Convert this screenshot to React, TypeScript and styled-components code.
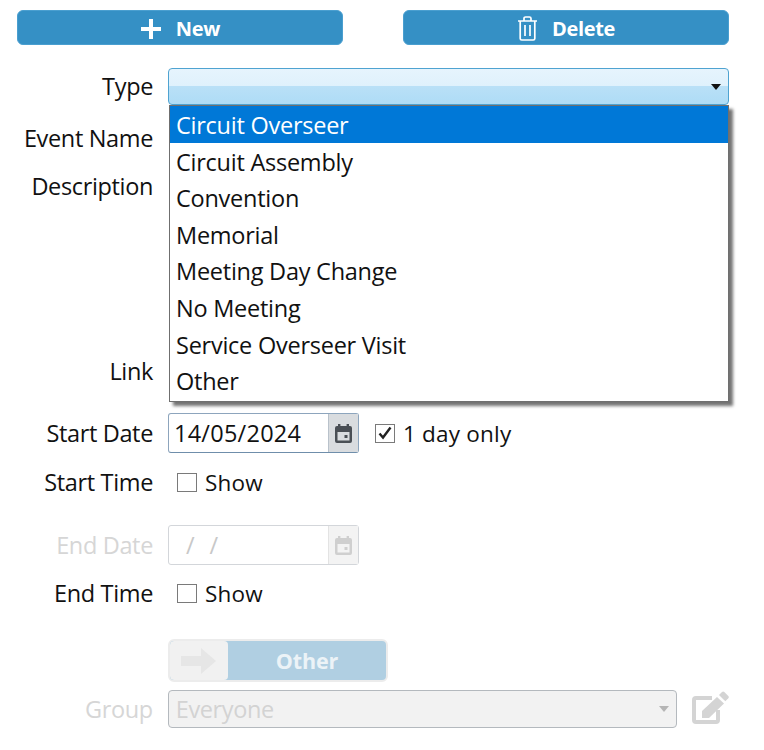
import React from "react";
import styled, { createGlobalStyle } from "styled-components";

const Global = createGlobalStyle`
  html, body { margin: 0; padding: 0; background: #fff; }
  body { font-family: "Open Sans", "Noto Sans", sans-serif; color: #111; }
`;

const Page = styled.div`
  position: relative;
  width: 764px;
  height: 750px;
  overflow: hidden;
  padding: 10px 35px 0 17px;
  box-sizing: border-box;
`;

const Toolbar = styled.div`
  display: flex;
  gap: 60px;
  height: 35px;
  margin-bottom: 23px;
`;

const ActionButton = styled.button`
  flex: 1;
  display: flex;
  align-items: center;
  justify-content: center;
  gap: 14px;
  margin: 0;
  padding: 2px 0 0;
  border: 1px solid #4a9fd0;
  border-radius: 6px;
  background: #3590c5;
  color: #fff;
  font: 700 20px/1 "Open Sans", sans-serif;
  letter-spacing: -0.3px;
`;

const Row = styled.div<{ $h: number; $mb?: number; $top?: boolean }>`
  display: flex;
  align-items: ${(p) => (p.$top ? "flex-start" : "center")};
  height: ${(p) => p.$h}px;
  margin-bottom: ${(p) => p.$mb ?? 0}px;
`;

const Label = styled.div<{ $muted?: boolean }>`
  width: 136px;
  margin-right: 15px;
  text-align: right;
  font-size: 23.5px;
  line-height: 33px;
  letter-spacing: -0.35px;
  white-space: nowrap;
  color: ${(p) => (p.$muted ? "#d6d6d6" : "#111")};
`;

const TypeSelect = styled.div`
  position: relative;
  flex: 1;
  height: 37px;
  box-sizing: border-box;
  border: 1px solid #4fa3d1;
  border-radius: 4px;
  background: linear-gradient(#e6f4fd 0%, #dff1fc 49%, #b9e0f7 50%, #aedcf6 100%);
`;

const Caret = styled.span<{ $c: string; $r: number }>`
  position: absolute;
  right: ${(p) => p.$r}px;
  top: 50%;
  margin-top: -3px;
  border-left: 5px solid transparent;
  border-right: 5px solid transparent;
  border-top: 6px solid ${(p) => p.$c};
`;

const Dropdown = styled.ul`
  position: absolute;
  left: 169px;
  top: 105px;
  width: 560px;
  height: 297px;
  box-sizing: border-box;
  margin: 0;
  padding: 0;
  list-style: none;
  background: #fff;
  border: 1px solid #6f6f6f;
  box-shadow: 4px 4px 3px rgba(0, 0, 0, 0.55);
  z-index: 2;
`;

const Option = styled.li<{ $active?: boolean }>`
  height: 36.6px;
  padding-left: 6px;
  font-size: 23.5px;
  line-height: 38px;
  letter-spacing: -0.25px;
  white-space: nowrap;
  background: ${(p) => (p.$active ? "#0078d7" : "transparent")};
  color: ${(p) => (p.$active ? "#fff" : "#111")};
`;

const DateBox = styled.div<{ $off?: boolean }>`
  display: flex;
  width: 191px;
  height: 40px;
  box-sizing: border-box;
  border: ${(p) => (p.$off ? "1px solid #d3d6da" : "1px solid #8da5bd")};
  border-bottom-color: ${(p) => (p.$off ? "#d3d6da" : "#6f8eab")};
  border-radius: 3px;
  background: #fff;
`;

const DateText = styled.div<{ $off?: boolean }>`
  flex: 1;
  padding-left: ${(p) => (p.$off ? "17px" : "5px")};
  font-size: 23.5px;
  line-height: 38px;
  letter-spacing: ${(p) => (p.$off ? "15px" : "0.25px")};
  color: ${(p) => (p.$off ? "#c8c8c8" : "#111")};
`;

const DateButton = styled.div<{ $off?: boolean }>`
  display: flex;
  align-items: center;
  justify-content: center;
  width: 29px;
  border-left: 1px solid ${(p) => (p.$off ? "#e3e3e3" : "#b9c2cb")};
  background: ${(p) => (p.$off ? "#f3f3f3" : "#d9dcdf")};
`;

const CheckBox = styled.span<{ $ml: number }>`
  display: inline-flex;
  align-items: center;
  justify-content: center;
  width: 20px;
  height: 19px;
  box-sizing: border-box;
  margin-left: ${(p) => p.$ml}px;
  margin-right: 8px;
  border: 1px solid #7a7a7a;
  background: #fff;
`;

const CheckText = styled.span`
  font-size: 22.5px;
  line-height: 33px;
  letter-spacing: 0.2px;
  color: #111;
`;

const Toggle = styled.div`
  display: flex;
  width: 220px;
  height: 43px;
  box-sizing: border-box;
  border: 2px solid #ececec;
  border-radius: 6px;
  overflow: hidden;
  background: #b0cfe2;
`;

const ToggleKnob = styled.div`
  display: flex;
  align-items: center;
  justify-content: center;
  width: 58px;
  background: #f1f1f1;
  border-radius: 4px;
`;

const ToggleText = styled.div`
  flex: 1;
  text-align: center;
  font-weight: 700;
  font-size: 21.5px;
  line-height: 39px;
  letter-spacing: -0.15px;
  color: #ecf3f7;
`;

const GroupSelect = styled.div`
  position: relative;
  width: 510px;
  height: 38px;
  box-sizing: border-box;
  padding-left: 7px;
  border: 1px solid #b4b9be;
  border-radius: 4px;
  background: #f2f2f2;
  color: #d3d3d3;
  font-size: 23.5px;
  line-height: 36px;
  letter-spacing: -0.4px;
`;

const EditLink = styled.span`
  display: flex;
  margin-left: 14px;
`;

const Plus = () => (
  <svg width="22" height="22" viewBox="0 0 22 22">
    <path d="M11 1v20M1 11h20" stroke="#fff" strokeWidth="4" fill="none" />
  </svg>
);

const Trash = () => (
  <svg width="21" height="25" viewBox="0 0 21 25" fill="none" stroke="#fff" strokeWidth="1.7">
    <path d="M1 5h19M3.2 5v17.5q0 1.5 1.5 1.5h11.6q1.5 0 1.5-1.5V5M7 5V2.6Q7 1 8.6 1h3.8Q14 1 14 2.6V5M8 9v11M13 9v11" />
  </svg>
);

const Calendar = ({ c }: { c: string }) => (
  <svg width="19" height="19" viewBox="0 0 19 19">
    <path
      fill={c}
      fillRule="evenodd"
      d="M4 0h2.4v2h6.2V0H15v2h1q2 0 2 2v13q0 2-2 2H3q-2 0-2-2V4q0-2 2-2h1zM3.5 8v8.5h12V8zm7 3h3v3h-3z"
    />
  </svg>
);

const Check = () => (
  <svg width="16" height="16" viewBox="0 0 16 16">
    <path d="M2.5 8.5l3.5 4L13.5 2.5" stroke="#222" strokeWidth="2.4" fill="none" />
  </svg>
);

const Arrow = () => (
  <svg width="36" height="26" viewBox="0 0 36 26">
    <path fill="#e6e6e6" d="M0 8h20V0l15 13-15 13v-8H0z" />
  </svg>
);

const EditIcon = () => (
  <svg width="38" height="36" viewBox="0 0 38 36" fill="#d4d4d4">
    <path d="M21 7H5Q3 7 3 9v20q0 2 2 2h20q2 0 2-2V19" fill="none" stroke="#d4d4d4" strokeWidth="4" />
    <path d="M11 27v-7L26 6l7 6.500L18 27z" />
    <path d="M28 4l3-3q1.200-1 2.300 0l4 4q1 1.200 0 2.300l-3 3z" />
  </svg>
);

const options = [
  "Circuit Overseer",
  "Circuit Assembly",
  "Convention",
  "Memorial",
  "Meeting Day Change",
  "No Meeting",
  "Service Overseer Visit",
  "Other",
];

export default function App() {
  return (
    <Page>
      <Global />
      <Toolbar>
        <ActionButton><Plus />New</ActionButton>
        <ActionButton><Trash />Delete</ActionButton>
      </Toolbar>
      <Row $h={37} $mb={15}>
        <Label>Type</Label>
        <TypeSelect><Caret $c="#111" $r={7} /></TypeSelect>
      </Row>
      <Row $h={36} $mb={14}><Label>Event Name</Label></Row>
      <Row $h={183} $top><Label>Description</Label></Row>
      <Row $h={36} $mb={24}><Label>Link</Label></Row>
      <Row $h={40} $mb={11}>
        <Label>Start Date</Label>
        <DateBox>
          <DateText>14/05/2024</DateText>
          <DateButton><Calendar c="#4a4f55" /></DateButton>
        </DateBox>
        <CheckBox $ml={16}><Check /></CheckBox>
        <CheckText>1 day only</CheckText>
      </Row>
      <Row $h={36} $mb={25}>
        <Label>Start Time</Label>
        <CheckBox $ml={9} />
        <CheckText>Show</CheckText>
      </Row>
      <Row $h={40} $mb={10}>
        <Label $muted>End Date</Label>
        <DateBox $off>
          <DateText $off>//</DateText>
          <DateButton $off><Calendar c="#cfcfcf" /></DateButton>
        </DateBox>
      </Row>
      <Row $h={36} $mb={28}>
        <Label>End Time</Label>
        <CheckBox $ml={9} />
        <CheckText>Show</CheckText>
      </Row>
      <Row $h={43} $mb={8}>
        <Label />
        <Toggle>
          <ToggleKnob><Arrow /></ToggleKnob>
          <ToggleText>Other</ToggleText>
        </Toggle>
      </Row>
      <Row $h={38}>
        <Label $muted>Group</Label>
        <GroupSelect>Everyone<Caret $c="#b5b5b5" $r={7} /></GroupSelect>
        <EditLink><EditIcon /></EditLink>
      </Row>
      <Dropdown>
        {options.map((o, i) => (
          <Option key={o} $active={i === 0}>{o}</Option>
        ))}
      </Dropdown>
    </Page>
  );
}
